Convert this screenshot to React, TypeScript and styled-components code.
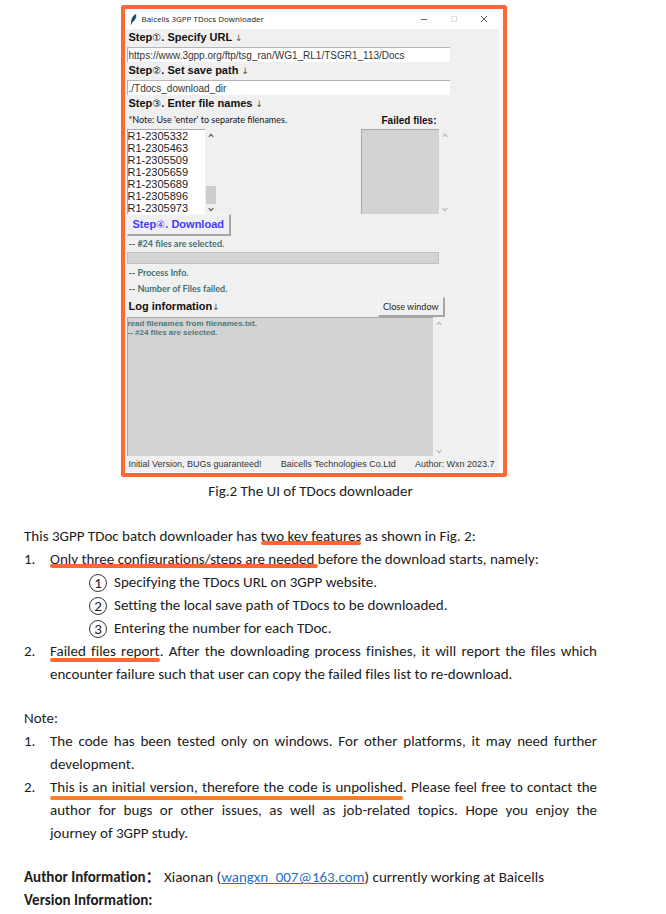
import React from "react";
import styled, { createGlobalStyle } from "styled-components";

const GlobalStyle = createGlobalStyle`
  * { box-sizing: border-box; }
  body { margin: 0; background: #fff; color: #1c1c1c; }
`;

const ui = '"Liberation Sans", "DejaVu Sans", sans-serif';
const humanist = 'Lato, "Liberation Sans", sans-serif';
const orange = "#ff6733";

const Page = styled.main`
  padding: 5px 69px 0 24px;
  font: 15px/23px Carlito, Calibri, Lato, "Noto Sans CJK SC", sans-serif;
  font-variant-ligatures: none;
`;

const Figure = styled.figure`
  margin: 0 0 22px;
  display: flex;
  flex-direction: column;
  align-items: center;
`;

const Frame = styled.div`
  width: 100%;
  padding-left: 6px;
  display: flex;
  justify-content: center;
`;

const Caption = styled.figcaption`
  margin-top: 3px;
`;

const AppWindow = styled.section`
  width: 100%;
  max-width: 386px;
  border: 4px solid ${orange};
  border-radius: 2px;
  background: #fff;
  padding-right: 4px;
  padding-bottom: 1px;
  font: 11px/14px ${ui};
  color: #111;
`;

const TitleBar = styled.header`
  display: flex;
  align-items: center;
  height: 20px;
  padding: 0 10px 0 5px;
  gap: 4px;
  font: 8px/14px "Open Sans", sans-serif;
  color: #222;
`;

const Title = styled.span`
  flex: 1;
`;

const WindowButtons = styled.div`
  display: flex;
  gap: 20px;
`;

const WindowButton = styled.button<{ $faint?: boolean }>`
  display: flex;
  padding: 0;
  border: 0;
  background: none;
  color: ${(p) => (p.$faint ? "#dedede" : "#666")};
`;

const Body = styled.div`
  background: #f0f0f0;
  padding: 0 0 1px 2px;
`;

const StepLabel = styled.label`
  display: block;
  padding: 0 2px;
  height: 18px;
  line-height: 17px;
  font-weight: bold;
`;

const StepDigit = styled.span`
  font: 10px/16px "DejaVu Sans", sans-serif;
`;

const Arrow = styled.span`
  font: 9px/16px "DejaVu Sans", sans-serif;
  color: #555;
`;

const TextField = styled.input`
  display: block;
  width: calc(100% - 49px);
  height: 15px;
  padding: 0 1px;
  border: 0;
  border-top: 1px solid #b4b4b4;
  border-left: 1px solid #b4b4b4;
  background: #fff;
  font: 10px/14px ${ui};
  color: #333;
`;

const FilesRow = styled.div`
  display: flex;
  justify-content: space-between;
  padding-right: 48px;
`;

const FilesColumn = styled.div`
  display: flex;
  flex-direction: column;
`;

const Hint = styled.span`
  height: 16px;
  padding-left: 2px;
  font: 9px/14px ${humanist};
`;

const FailedLabel = styled.label`
  height: 16px;
  padding-left: 21px;
  line-height: 16px;
  font-weight: bold;
  font-size: 10px;
`;

const ScrollArea = styled.div<{ $end?: number }>`
  display: flex;
  padding-right: ${(p) => p.$end ?? 0}px;
`;

const FileList = styled.textarea<{ $muted?: boolean }>`
  display: block;
  width: 78px;
  height: 85px;
  padding: 0;
  resize: none;
  overflow: hidden;
  border: 0;
  border-top: 1px solid #aaa;
  border-left: 1px solid #aaa;
  background: ${(p) => (p.$muted ? "#d3d3d3" : "#fff")};
  font: 11px/12px ${ui};
  color: #222;
`;

const ScrollTrack = styled.div`
  display: flex;
  flex-direction: column;
  align-items: center;
  width: 12px;
  padding: 4px 0 2px;
`;

const Thumb = styled.span`
  width: 10px;
  height: 18px;
  margin-bottom: 3px;
  background: #cdcdcd;
`;

const Spacer = styled.span`
  flex: 1;
`;

const RaisedButton = styled.button<{ $primary?: boolean }>`
  display: block;
  height: ${(p) => (p.$primary ? 22 : 20)}px;
  padding: 0 ${(p) => (p.$primary ? 5 : 4)}px;
  border: 1px solid #f8f8f8;
  border-right: 2px solid #a6a6a6;
  border-bottom: 2px solid #a6a6a6;
  background: #f0f0f0;
  font: ${(p) => (p.$primary ? `bold 11px/16px ${ui}` : `9px/16px ${humanist}`)};
  color: ${(p) => (p.$primary ? "#3c3cff" : "#222")};
`;

const Status = styled.p`
  margin: 0;
  padding-left: 2px;
  font: bold 9px/16px ${humanist};
  color: #3f7272;
`;

const Progress = styled.div`
  width: calc(100% - 60px);
  height: 12px;
  margin-bottom: 1px;
  border: 1px solid #c0c0bc;
  background: #d3d3d3;
`;

const LogHeader = styled.div`
  display: flex;
  justify-content: space-between;
  align-items: center;
  padding-right: 54px;
`;

const LogLabel = styled.label`
  padding-left: 2px;
  font-weight: bold;
`;

const LogText = styled.textarea`
  display: block;
  flex: 1;
  height: 139px;
  padding: 1px 0 0;
  resize: none;
  overflow: hidden;
  border: 0;
  border-top: 1px solid #aaa;
  border-left: 1px solid #aaa;
  background: #d3d3d3;
  font: bold 8px/9px ${ui};
  color: #4c7878;
`;

const StatusBar = styled.footer`
  display: flex;
  justify-content: space-between;
  padding: 2px 4px 0 2px;
  font-size: 9px;
  line-height: 13px;
  color: #333;
`;

const Para = styled.p<{ $bold?: boolean }>`
  margin: 0;
  font-weight: ${(p) => (p.$bold ? "bold" : "normal")};
`;

const List = styled.ol`
  list-style: none;
  margin: 0 0 21px;
  padding: 0;
`;

const Item = styled.li`
  display: grid;
  grid-template-columns: 26px 1fr;
  text-align: justify;
`;

const SubList = styled.ol`
  list-style: none;
  margin: 0;
  padding: 0 0 0 39px;
`;

const SubItem = styled.li`
  display: flex;
  align-items: center;
  gap: 7px;
`;

const Digit = styled.span`
  display: flex;
  align-items: center;
  justify-content: center;
  width: 18px;
  height: 18px;
  border: 1px solid #333;
  border-radius: 50%;
  line-height: 16px;
`;

const Together = styled.span`
  white-space: nowrap;
`;

const Marked = styled.span<{ $color?: string; $drop?: number }>`
  position: relative;
  &::after {
    content: "";
    position: absolute;
    left: 0;
    right: 0;
    bottom: ${(p) => -(p.$drop ?? 0)}px;
    height: 4px;
    border-radius: 2px;
    background: ${(p) => p.$color ?? orange};
  }
`;

const MailLink = styled.a`
  color: #1f6fc9;
`;

const Chevron = ({ up, dark }: { up?: boolean; dark?: boolean }) => (
  <svg width="6" height="5" viewBox="0 0 6 5" fill="none" stroke={dark ? "#555" : "#b5b5b5"} strokeWidth="1.2">
    <path d={up ? "M0.8 3.8 3 1.4 5.2 3.8" : "M0.8 1.2 3 3.6 5.2 1.2"} />
  </svg>
);

const Feather = () => (
  <svg width="8" height="12" viewBox="0 0 8 12">
    <path d="M1.4 10.4C.7 7 2 2.6 6 1c1 2.600-.4 6.800-3.600 8Z" fill="#2c5d87" />
    <path d="M1 11.500C2 8.500 3.200 5.500 5.200 2.500" fill="none" stroke="#17263a" strokeWidth=".8" />
  </svg>
);

const Scroll = ({ dark, thumb }: { dark?: boolean; thumb?: boolean }) => (
  <ScrollTrack>
    <Chevron up dark={dark} />
    <Spacer />
    {thumb && <Thumb />}
    <Chevron dark={dark} />
  </ScrollTrack>
);

const files = ["R1-2305332", "R1-2305463", "R1-2305509", "R1-2305659", "R1-2305689", "R1-2305896", "R1-2305973"];

const configSteps = [
  "Specifying the TDocs URL on 3GPP website.",
  "Setting the local save path of TDocs to be downloaded.",
  "Entering the number for each TDoc.",
];

function Downloader() {
  return (
    <AppWindow aria-label="Baicells 3GPP TDocs Downloader">
      <TitleBar>
        <Feather />
        <Title>Baicells 3GPP TDocs Downloader</Title>
        <WindowButtons>
          <WindowButton aria-label="Minimize">
            <svg width="10" height="10" stroke="currentColor"><path d="M2 5.500H8" /></svg>
          </WindowButton>
          <WindowButton aria-label="Maximize" $faint>
            <svg width="10" height="10" fill="none" stroke="currentColor"><path d="M2.500 2.500H7.500V7.500H2.500Z" /></svg>
          </WindowButton>
          <WindowButton aria-label="Close">
            <svg width="10" height="10" stroke="currentColor"><path d="M2 2 8 8M8 2 2 8" /></svg>
          </WindowButton>
        </WindowButtons>
      </TitleBar>
      <Body>
        <StepLabel htmlFor="url">Step<StepDigit>①</StepDigit>. Specify URL <Arrow>↓</Arrow></StepLabel>
        <TextField id="url" defaultValue="https://www.3gpp.org/ftp/tsg_ran/WG1_RL1/TSGR1_113/Docs" />
        <StepLabel htmlFor="path">Step<StepDigit>②</StepDigit>. Set save path <Arrow>↓</Arrow></StepLabel>
        <TextField id="path" defaultValue="./Tdocs_download_dir" />
        <StepLabel htmlFor="names">Step<StepDigit>③</StepDigit>. Enter file names <Arrow>↓</Arrow></StepLabel>
        <FilesRow>
          <FilesColumn>
            <Hint>*Note: Use 'enter' to separate filenames.</Hint>
            <ScrollArea>
              <FileList id="names" defaultValue={files.join("\n")} />
              <Scroll dark thumb />
            </ScrollArea>
          </FilesColumn>
          <FilesColumn>
            <FailedLabel htmlFor="failed">Failed files:</FailedLabel>
            <ScrollArea>
              <FileList id="failed" $muted readOnly />
              <Scroll />
            </ScrollArea>
          </FilesColumn>
        </FilesRow>
        <RaisedButton $primary>Step<StepDigit>④</StepDigit>. Download</RaisedButton>
        <Status>-- #24 files are selected.</Status>
        <Progress role="progressbar" aria-label="Download progress" />
        <Status>-- Process Info.</Status>
        <Status>-- Number of Files failed.</Status>
        <LogHeader>
          <LogLabel htmlFor="log">Log information<Arrow>↓</Arrow></LogLabel>
          <RaisedButton>Close window</RaisedButton>
        </LogHeader>
        <ScrollArea $end={54}>
          <LogText id="log" readOnly defaultValue={"read filenames from filenames.txt.\n-- #24 files are selected."} />
          <Scroll />
        </ScrollArea>
        <StatusBar>
          <span>Initial Version, BUGs guaranteed!</span>
          <span>Baicells Technologies Co.Ltd</span>
          <span>Author: Wxn 2023.7</span>
        </StatusBar>
      </Body>
    </AppWindow>
  );
}

export default function App() {
  return (
    <>
      <GlobalStyle />
      <Page>
        <Figure>
          <Frame>
            <Downloader />
          </Frame>
          <Caption>Fig.2 The UI of TDocs downloader</Caption>
        </Figure>
        <Para>
          This 3GPP TDoc batch downloader has <Marked>two key features</Marked> as shown in Fig. 2:
        </Para>
        <List>
          <Item>
            <span>1.</span>
            <div>
              <Marked>Only three configurations/steps are needed </Marked>before the download starts, namely:
              <SubList>
                {configSteps.map((text, i) => (
                  <SubItem key={text}>
                    <Digit>{i + 1}</Digit>
                    {text}
                  </SubItem>
                ))}
              </SubList>
            </div>
          </Item>
          <Item>
            <span>2.</span>
            <div>
              <Marked $drop={2}>Failed files report</Marked>. After the downloading process finishes, it will report
              the files which encounter failure such that user can copy the failed files list to re-download.
            </div>
          </Item>
        </List>
        <Para>Note:</Para>
        <List>
          <Item>
            <span>1.</span>
            <div>
              The code has been tested only on windows. For other platforms, it may need further development.
            </div>
          </Item>
          <Item>
            <span>2.</span>
            <div>
              <Marked $color="#ff7f27" $drop={4}>This is an initial version, therefore the code is unpolished</Marked>.
              Please feel free to contact the author for bugs or other issues, as well as job-related topics. Hope you
              enjoy the <Together>journey of 3GPP study.</Together>
            </div>
          </Item>
        </List>
        <Para>
          <strong>Author Information：</strong> Xiaonan (<MailLink href="mailto:wangxn_007@163.com">wangxn_007@163.com</MailLink>)
          currently working at Baicells
        </Para>
        <Para $bold>Version Information:</Para>
      </Page>
    </>
  );
}
